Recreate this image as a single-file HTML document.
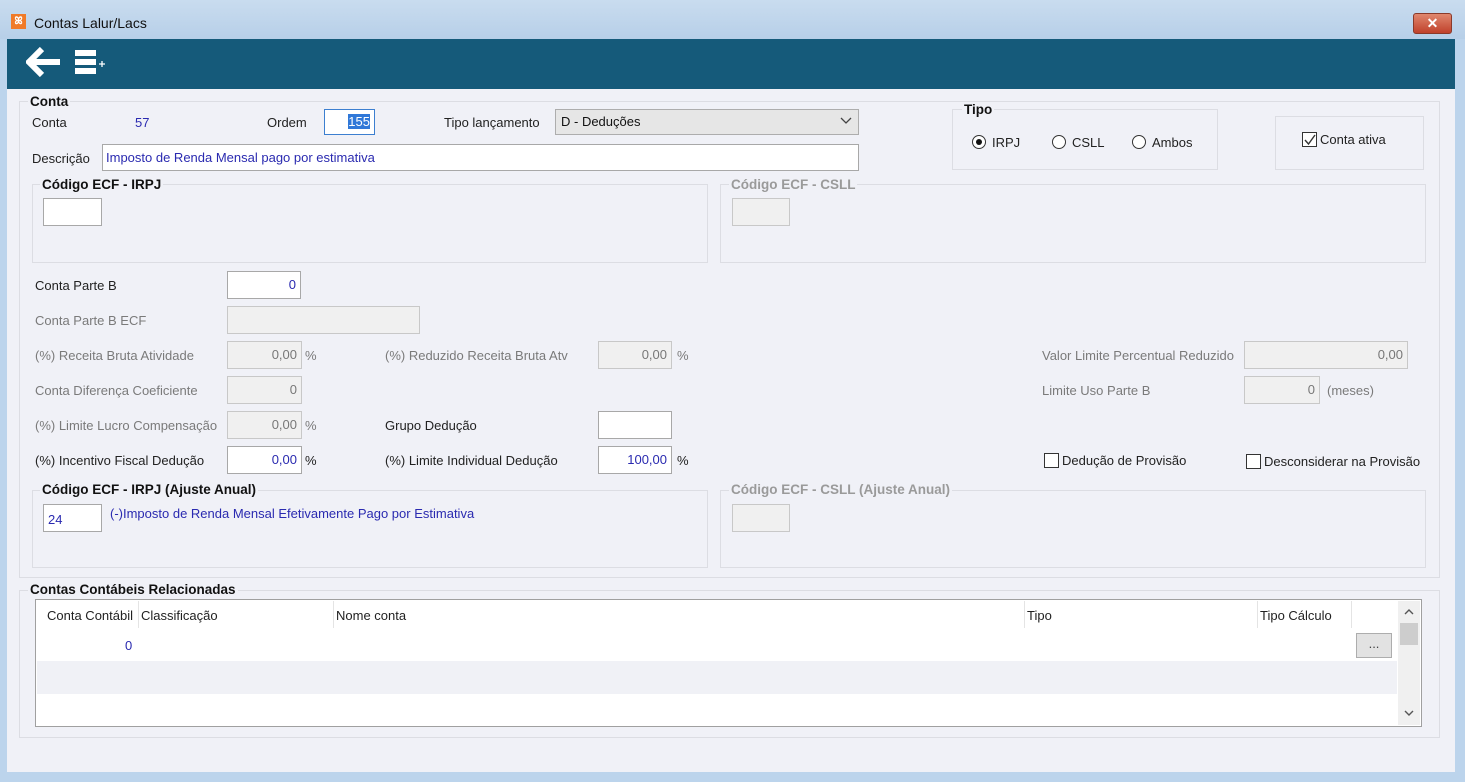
<!DOCTYPE html>
<html><head><meta charset="utf-8"><style>
*{box-sizing:border-box;margin:0;padding:0}
body{width:1465px;height:782px;overflow:hidden;background:#bcd4ec;font-family:"Liberation Sans",sans-serif;font-size:13px;color:#222;position:relative}
.a{position:absolute;white-space:nowrap}
.title{left:0;top:0;width:1465px;height:39px;background:linear-gradient(#c9dcef,#b7cfe8)}
.tb{left:7px;top:39px;width:1448px;height:50px;background:#155a7a}
.content{left:7px;top:89px;width:1448px;height:683px;background:#f0f1f7}
.gb{position:absolute;border:1px solid #dcdde3}
.lg{position:absolute;font-weight:bold;background:#f0f1f7;padding:0 2px;font-size:13.5px;color:#111}
.in{position:absolute;background:#fff;border:1px solid #a8a8a8;text-align:right;padding:0 4px;line-height:25px;color:#2a2ab0}
.dis{background:#f0f0f0;border-color:#c8c8c8;color:#777}
.g{color:#7a7a7a}
.blue{color:#2a2ab0}
.cb{position:absolute;width:15px;height:15px;border:1px solid #333;background:#fff}
.rd{position:absolute;width:14px;height:14px;border:1px solid #333;border-radius:50%;background:#fff}
.hs{position:absolute;top:601px;width:1px;height:27px;background:#e4e4e4}
</style></head><body>
<div class="a title"></div>
<div class="a" style="left:11px;top:14px;width:15px;height:15px;background:#f07a28;color:#fff;font-size:10px;line-height:15px;text-align:center;font-weight:bold">ꕤ</div>
<div class="a" style="left:34px;top:15px;font-size:14px;color:#111">Contas Lalur/Lacs</div>
<div class="a" style="left:1413px;top:13px;width:39px;height:21px;background:linear-gradient(#e0876e,#c0412b);border:1px solid #8a3a2a;border-radius:3px;color:#fff;font-weight:bold;text-align:center;line-height:18px;font-size:14px">✕</div>
<div class="a tb"></div>
<svg class="a" style="left:26px;top:47px" width="36" height="30" viewBox="0 0 36 30"><path d="M16 2 L3 15 L16 28 M4 15 H34" stroke="#fff" stroke-width="6" fill="none" stroke-linejoin="miter"/></svg>
<svg class="a" style="left:74px;top:50px" width="34" height="26"><rect x="1" y="0" width="21" height="6" fill="#fff"/><rect x="1" y="9" width="21" height="6" fill="#fff"/><rect x="1" y="18" width="21" height="6" fill="#fff"/><path d="M25 14h6M28 11v6" stroke="#fff" stroke-width="1.3"/></svg>
<div class="a content"></div>

<div class="gb" style="left:19px;top:101px;width:1421px;height:477px"></div>
<div class="lg" style="left:28px;top:94px">Conta</div>
<div class="a" style="left:32px;top:115px">Conta</div>
<div class="a blue" style="left:135px;top:115px">57</div>
<div class="a" style="left:267px;top:115px">Ordem</div>
<div class="in" style="left:324px;top:109px;width:51px;height:26px;border:1px solid #3c7fd0;line-height:23px"><span style="background:#3078d8;color:#fff">155</span></div>
<div class="a" style="left:444px;top:115px">Tipo lançamento</div>
<div class="a" style="left:555px;top:109px;width:304px;height:26px;background:#e6e6e6;border:1px solid #adadad;padding:0 5px;line-height:24px;color:#111">D - Deduções</div>
<svg class="a" style="left:840px;top:117px" width="12" height="8"><path d="M1 1l5 5 5-5" stroke="#444" fill="none" stroke-width="1.3"/></svg>
<div class="a" style="left:32px;top:151px">Descrição</div>
<div class="in" style="left:102px;top:144px;width:757px;height:27px;text-align:left;padding:0 3px">Imposto de Renda Mensal pago por estimativa</div>

<div class="gb" style="left:952px;top:109px;width:266px;height:61px"></div>
<div class="lg" style="left:962px;top:102px">Tipo</div>
<div class="rd" style="left:972px;top:135px"></div><div class="a" style="left:976px;top:139px;width:6px;height:6px;border-radius:50%;background:#111"></div>
<div class="a" style="left:992px;top:135px">IRPJ</div>
<div class="rd" style="left:1052px;top:135px"></div><div class="a" style="left:1072px;top:135px">CSLL</div>
<div class="rd" style="left:1132px;top:135px"></div><div class="a" style="left:1152px;top:135px">Ambos</div>
<div class="gb" style="left:1275px;top:116px;width:149px;height:54px"></div>
<div class="cb" style="left:1302px;top:132px"></div>
<svg class="a" style="left:1303px;top:133px" width="14" height="14"><path d="M2 7l3.5 4L12 2" stroke="#333" fill="none" stroke-width="1.4"/></svg>
<div class="a" style="left:1320px;top:132px">Conta ativa</div>

<div class="gb" style="left:32px;top:184px;width:676px;height:79px"></div>
<div class="lg" style="left:40px;top:177px">Código ECF - IRPJ</div>
<div class="in" style="left:43px;top:198px;width:59px;height:28px"></div>
<div class="gb" style="left:720px;top:184px;width:706px;height:79px"></div>
<div class="lg" style="left:729px;top:177px;color:#9a9a9a">Código ECF - CSLL</div>
<div class="in dis" style="left:732px;top:198px;width:58px;height:28px"></div>

<div class="a" style="left:35px;top:278px">Conta Parte B</div>
<div class="in" style="left:227px;top:271px;width:74px;height:28px">0</div>
<div class="a g" style="left:35px;top:313px">Conta Parte B ECF</div>
<div class="in dis" style="left:227px;top:306px;width:193px;height:28px"></div>

<div class="a g" style="left:35px;top:348px">(%) Receita Bruta Atividade</div>
<div class="in dis" style="left:227px;top:341px;width:75px;height:28px">0,00</div><div class="a g" style="left:305px;top:348px">%</div>
<div class="a g" style="left:385px;top:348px">(%) Reduzido Receita Bruta Atv</div>
<div class="in dis" style="left:598px;top:341px;width:74px;height:28px">0,00</div><div class="a g" style="left:677px;top:348px">%</div>
<div class="a g" style="left:1042px;top:348px">Valor Limite Percentual Reduzido</div>
<div class="in dis" style="left:1244px;top:341px;width:164px;height:28px">0,00</div>

<div class="a g" style="left:35px;top:383px">Conta Diferença Coeficiente</div>
<div class="in dis" style="left:227px;top:376px;width:75px;height:28px">0</div>
<div class="a g" style="left:1042px;top:383px">Limite Uso Parte B</div>
<div class="in dis" style="left:1244px;top:376px;width:76px;height:28px">0</div><div class="a g" style="left:1327px;top:383px">(meses)</div>

<div class="a g" style="left:35px;top:418px">(%) Limite Lucro Compensação</div>
<div class="in dis" style="left:227px;top:411px;width:75px;height:28px">0,00</div><div class="a g" style="left:305px;top:418px">%</div>
<div class="a" style="left:385px;top:418px">Grupo Dedução</div>
<div class="in" style="left:598px;top:411px;width:74px;height:28px"></div>

<div class="a" style="left:35px;top:453px">(%) Incentivo Fiscal Dedução</div>
<div class="in" style="left:227px;top:446px;width:75px;height:28px">0,00</div><div class="a" style="left:305px;top:453px">%</div>
<div class="a" style="left:385px;top:453px">(%) Limite Individual Dedução</div>
<div class="in" style="left:598px;top:446px;width:74px;height:28px">100,00</div><div class="a" style="left:677px;top:453px">%</div>
<div class="cb" style="left:1044px;top:453px"></div><div class="a" style="left:1062px;top:453px">Dedução de Provisão</div>
<div class="cb" style="left:1246px;top:454px"></div><div class="a" style="left:1264px;top:454px">Desconsiderar na Provisão</div>

<div class="gb" style="left:32px;top:490px;width:676px;height:78px"></div>
<div class="lg" style="left:40px;top:482px">Código ECF - IRPJ (Ajuste Anual)</div>
<div class="in" style="left:43px;top:504px;width:59px;height:28px;text-align:left;line-height:29px">24</div>
<div class="a blue" style="left:110px;top:506px">(-)Imposto de Renda Mensal Efetivamente Pago por Estimativa</div>
<div class="gb" style="left:720px;top:490px;width:706px;height:78px"></div>
<div class="lg" style="left:729px;top:482px;color:#9a9a9a">Código ECF - CSLL (Ajuste Anual)</div>
<div class="in dis" style="left:732px;top:504px;width:58px;height:28px"></div>

<div class="gb" style="left:19px;top:590px;width:1421px;height:148px"></div>
<div class="lg" style="left:28px;top:582px">Contas Contábeis Relacionadas</div>
<div class="a" style="left:35px;top:599px;width:1387px;height:128px;background:#fff;border:1px solid #a0a0a0"></div>
<div class="a" style="left:37px;top:661px;width:1360px;height:33px;background:#f0f1f6"></div>
<div class="a" style="left:47px;top:608px">Conta Contábil</div>
<div class="hs" style="left:138px"></div><div class="a" style="left:141px;top:608px">Classificação</div>
<div class="hs" style="left:333px"></div><div class="a" style="left:336px;top:608px">Nome conta</div>
<div class="hs" style="left:1024px"></div><div class="a" style="left:1027px;top:608px">Tipo</div>
<div class="hs" style="left:1257px"></div><div class="a" style="left:1260px;top:608px">Tipo Cálculo</div>
<div class="hs" style="left:1351px"></div>
<div class="a blue" style="left:125px;top:638px">0</div>
<div class="a" style="left:1356px;top:633px;width:36px;height:25px;background:#e2e2e2;border:1px solid #adadad;text-align:center;line-height:20px;color:#444">...</div>
<div class="a" style="left:1398px;top:601px;width:22px;height:124px;background:#f0f0f0"></div>
<div class="a" style="left:1400px;top:623px;width:18px;height:22px;background:#cdcdcd"></div>
<svg class="a" style="left:1403px;top:608px" width="12" height="8"><path d="M2 6l4-4 4 4" stroke="#555" fill="none" stroke-width="1.4"/></svg>
<svg class="a" style="left:1403px;top:709px" width="12" height="8"><path d="M2 2l4 4 4-4" stroke="#555" fill="none" stroke-width="1.4"/></svg>
</body></html>
